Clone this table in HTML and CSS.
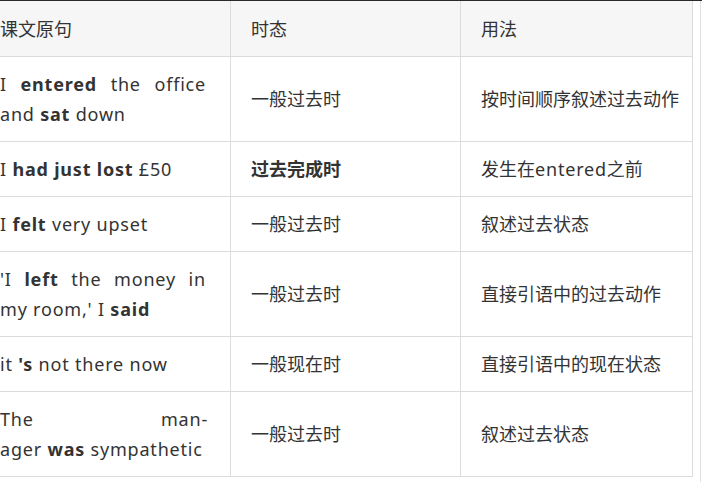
FILE: index.html
```html
<!DOCTYPE html>
<html lang="zh-CN">
<head>
<meta charset="utf-8">
<link rel="stylesheet" href="styles.css">
</head>
<body>
<div class="frame">
  <table class="grammar">
    <colgroup>
      <col class="c1">
      <col class="c2">
      <col class="c3">
    </colgroup>
    <thead>
      <tr><th>课文原句</th><th>时态</th><th class="use">用法</th></tr>
    </thead>
    <tbody>
      <tr>
        <td class="en">I <b>entered</b> the office and <b>sat</b> down</td>
        <td>一般过去时</td>
        <td class="use">按时间顺序叙述过去动作</td>
      </tr>
      <tr>
        <td class="en">I <b>had just lost</b> £50</td>
        <td><b>过去完成时</b></td>
        <td class="use">发生在<span class="lat">entered</span>之前</td>
      </tr>
      <tr>
        <td class="en">I <b>felt</b> very upset</td>
        <td>一般过去时</td>
        <td class="use">叙述过去状态</td>
      </tr>
      <tr>
        <td class="en">'I <b>left</b> the money in my room,' I <b>said</b></td>
        <td>一般过去时</td>
        <td class="use">直接引语中的过去动作</td>
      </tr>
      <tr>
        <td class="en">it <b>'s</b> not there now</td>
        <td>一般现在时</td>
        <td class="use">直接引语中的现在状态</td>
      </tr>
      <tr>
        <td class="en"><span class="first-line">The man-</span>ager <b>was</b> sympathetic</td>
        <td>一般过去时</td>
        <td class="use">叙述过去状态</td>
      </tr>
    </tbody>
  </table>
</div>
</body>
</html>
```

FILE: styles.css
```css
html, body {
  margin: 0;
  padding: 0;
  background: #fff;
}
body {
  border-top: 1px solid #2a2a2a;
  overflow: hidden;
  height: 481px;
}
.frame {
  width: 700px;
  border-right: 1px solid #e2e2e2;
  height: 481px;
  overflow: hidden;
}
.grammar {
  margin-left: -21px;
  border-collapse: collapse;
  table-layout: fixed;
  width: 713px;
  font-family: "Noto Sans", "Noto Sans CJK SC", sans-serif;
  font-size: 18px;
  line-height: 30px;
  color: #333;
}
.c1 { width: 251px; }
.c2 { width: 230px; }
.c3 { width: 232px; }
.grammar th,
.grammar td {
  border: 1px solid #dcdcdc;
  padding: 12px 20px;
  text-align: left;
  vertical-align: middle;
  font-weight: normal;
}
.grammar thead th {
  background: #f6f6f6;
  border-top: 0;
  padding-top: 13px;
}
.grammar .use {
  padding-right: 6px;
}
.grammar td.en {
  text-align: justify;
  padding-right: 24px;
  letter-spacing: 0.8px;
}
.lat {
  letter-spacing: 0.8px;
}
.first-line {
  display: block;
  margin-right: -2px;
  text-align: justify;
  text-align-last: justify;
}
.grammar b {
  font-weight: bold;
}
```
